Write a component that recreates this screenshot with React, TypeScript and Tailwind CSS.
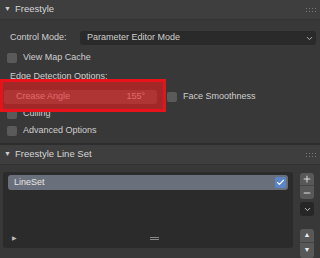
import { ChevronDown, Check, Plus, Minus } from "lucide-react"

function Box({ className = "" }: { className?: string }) {
  return <div className={"w-[10px] h-[10px] rounded-[2px] bg-[#5a5a5a] shrink-0 " + className} />
}

function Grip() {
  return (
    <svg width="10" height="5" viewBox="0 0 10 5" className="shrink-0">
      {[0, 3, 6, 9].map((x) => (
        <g key={x}>
          <rect x={x} y={0} width="1" height="1" fill="#7a7a7a" />
          <rect x={x} y={3} width="1" height="1" fill="#7a7a7a" />
        </g>
      ))}
    </svg>
  )
}

function Header({ title }: { title: string }) {
  return (
    <div className="h-[20px] bg-[#3e3e3e] flex items-center pl-[4px] pr-[4px] border-b border-[#333]">
      <span className="text-[7px] text-[#cfcfcf] w-[11px]">▼</span>
      <span className="text-[9.5px] text-[#d6d6d6]">{title}</span>
      <div className="ml-auto mt-[1px]">
        <Grip />
      </div>
    </div>
  )
}

function CheckRow({ label, className = "" }: { label: string; className?: string }) {
  return (
    <div className={"h-[14px] flex items-center pl-[7px] gap-[6px] " + className}>
      <Box />
      <span>{label}</span>
    </div>
  )
}

export default function App() {
  return (
    <div
      className="relative w-[320px] h-[258px] overflow-hidden bg-[#383838] text-[9px] text-[#cfcfcf]"
      style={{ fontFamily: '"Liberation Sans", Arial, sans-serif' }}
    >
      <Header title="Freestyle" />

      {/* Freestyle body */}
      <div className="h-[123px] flex flex-col">
        <div className="mt-[11px] h-[14px] flex items-center pl-[10px] pr-[4px]">
          <span className="w-[70px]">Control Mode:</span>
          <div className="flex-1 h-[14px] rounded-[3px] bg-[#2a2a2a] flex items-center pl-[7px] pr-[2px]">
            <span>Parameter Editor Mode</span>
            <ChevronDown className="ml-auto w-[9px] h-[9px] text-[#bbb]" strokeWidth={2.5} />
          </div>
        </div>

        <CheckRow label="View Map Cache" className="mt-[6px]" />

        <div className="mt-[5px] h-[14px] flex items-center pl-[10px]">Edge Detection Options:</div>

        <div className="mt-[6px] h-[14px] flex items-center pl-[4px]">
          <div className="w-[153px] h-[14px] rounded-[3px] bg-[#575757] flex items-center px-[12px]">
            <span>Crease Angle</span>
            <span className="ml-auto">155°</span>
          </div>
          <div className="ml-[10px] flex items-center gap-[6px]">
            <Box />
            <span>Face Smoothness</span>
          </div>
        </div>

        <CheckRow label="Culling" className="mt-[3px]" />
        <CheckRow label="Advanced Options" className="mt-[3px]" />
      </div>

      <div className="h-[2px] bg-[#2d2d2d]" />
      <Header title="Freestyle Line Set" />

      {/* Line set body */}
      <div className="flex pt-[7px] pl-[3px] pr-[6px]">
        <div className="w-[290px] h-[76px] rounded-[3px] bg-[#2b2b2b] flex flex-col pt-[3px] px-[5px]">
          <div className="h-[15px] rounded-[3px] bg-[#6a707b] flex items-center pl-[6px] pr-[2px] text-[#e6e6e6]">
            <span>LineSet</span>
            <div className="ml-auto w-[11px] h-[11px] rounded-[2px] bg-[#5a86c8] flex items-center justify-center">
              <Check className="w-[9px] h-[9px] text-white" strokeWidth={3} />
            </div>
          </div>
          <div className="mt-auto mb-[5px] flex items-center">
            <span className="text-[6px] text-[#bbb] pl-[4px]">▶</span>
            <div className="ml-[133px] flex flex-col gap-[1px]">
              <div className="w-[9px] h-[1px] bg-[#888]" />
              <div className="w-[9px] h-[1px] bg-[#888]" />
            </div>
          </div>
        </div>

        <div className="ml-auto flex flex-col w-[14px] pt-[1px]">
          <div className="h-[13px] rounded-t-[3px] bg-[#585858] flex items-center justify-center border-b border-[#444]">
            <Plus className="w-[10px] h-[10px] text-[#ddd]" strokeWidth={2.5} />
          </div>
          <div className="h-[13px] rounded-b-[3px] bg-[#585858] flex items-center justify-center">
            <Minus className="w-[10px] h-[10px] text-[#ddd]" strokeWidth={2.5} />
          </div>
          <div className="mt-[3px] h-[14px] rounded-[3px] bg-[#262626] flex items-center justify-center">
            <ChevronDown className="w-[9px] h-[9px] text-[#ccc]" strokeWidth={2.5} />
          </div>
          <div className="mt-[13px] h-[14px] rounded-t-[3px] bg-[#585858] flex items-center justify-center border-b border-[#444] text-[7px] text-[#eee]">
            ▲
          </div>
          <div className="h-[15px] rounded-b-[3px] bg-[#585858] flex items-center justify-center text-[7px] text-[#eee]">
            ▼
          </div>
        </div>
      </div>

      {/* highlight overlay */}
      <div className="absolute left-0 top-[79px] w-[166px] h-[33px] border-[3px] border-[#e8121a] bg-[rgba(240,30,30,0.58)]" />
    </div>
  )
}
